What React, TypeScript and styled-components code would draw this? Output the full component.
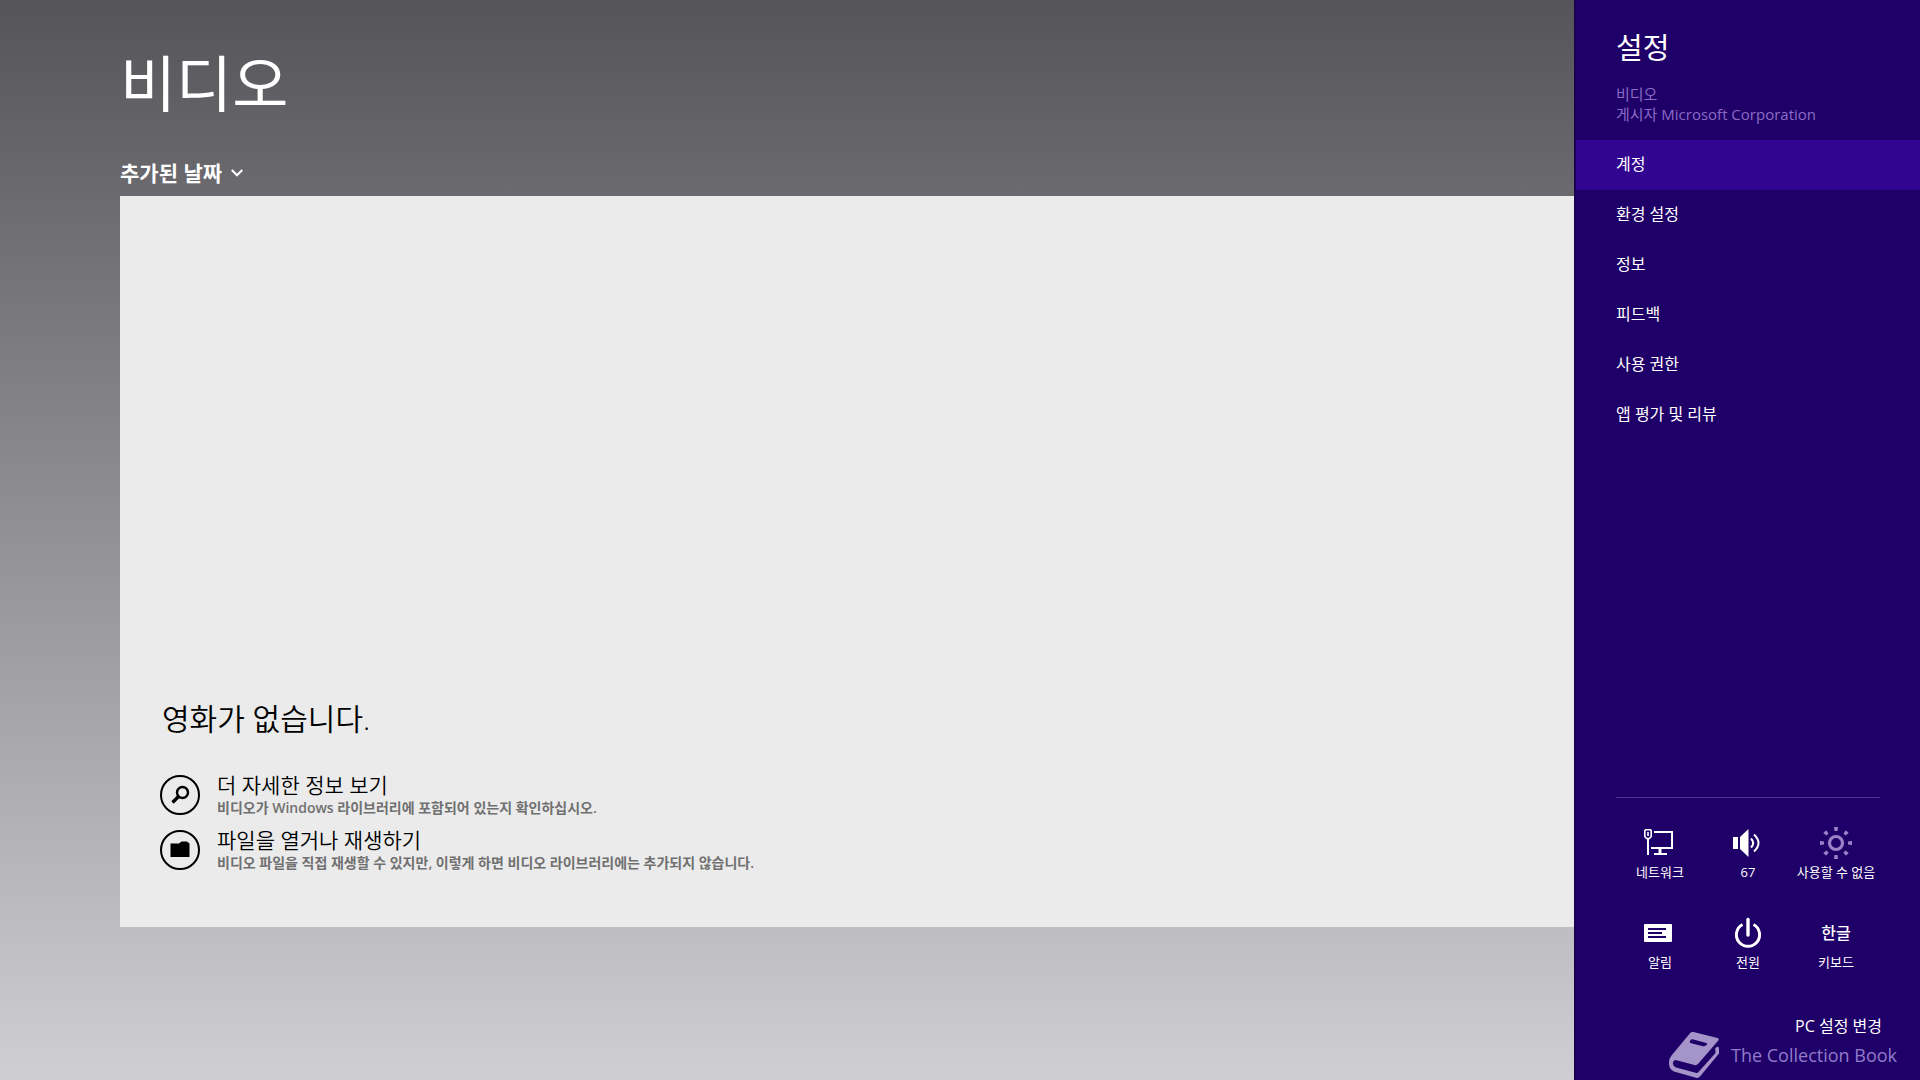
import React from "react";
import styled, { createGlobalStyle } from "styled-components";

const GlobalStyle = createGlobalStyle`
  *, *::before, *::after { box-sizing: border-box; }
  body {
    margin: 0;
    font-family: "Open Sans", "Noto Sans CJK KR", sans-serif;
    font-size: 16px;
    line-height: 20px;
    color: #ffffff;
  }
  h1, h2, p, ul { margin: 0; padding: 0; font-weight: 400; }
  ul { list-style: none; }
  svg { display: block; flex: none; }
`;

const Screen = styled.div`
  display: flex;
  min-height: 100vh;
  background: linear-gradient(#555459, #cfced3);
`;

const Library = styled.main`
  flex: 1;
  min-width: 0;
  display: flex;
  flex-direction: column;
  padding: 40px 0 153px 120px;
`;

const PageTitle = styled.h1`
  font-size: 61px;
  line-height: 88px;
  font-weight: 400;
`;

const SortBar = styled.div`
  display: flex;
  align-items: center;
  gap: 9px;
  height: 28px;
  margin: 31px 0 9px;
`;

const SortSelect = styled.select`
  appearance: none;
  field-sizing: content;
  border: 0;
  padding: 0;
  background: transparent;
  color: inherit;
  font: inherit;
  font-size: 21px;
  line-height: 28px;
  font-weight: 700;
`;

const EmptyPanel = styled.section`
  flex: 1;
  display: flex;
  flex-direction: column;
  justify-content: flex-end;
  padding: 40px 40px 52px;
  background: #ebebeb;
  color: #000000;
`;

const EmptyTitle = styled.h2`
  padding-left: 2px;
  font-size: 30px;
  line-height: 40px;
  margin-bottom: 31px;
  font-weight: 350;
`;

const ActionList = styled.ul`
  display: flex;
  flex-direction: column;
  gap: 5px;
`;

const Action = styled.button`
  display: flex;
  align-items: center;
  gap: 17px;
  height: 50px;
  padding: 0;
  border: 0;
  background: transparent;
  color: inherit;
  font: inherit;
  text-align: left;
`;

const ActionText = styled.span`
  display: flex;
  flex-direction: column;
`;

const ActionTitle = styled.span`
  font-size: 21px;
  line-height: 26px;
  font-weight: 350;
`;

const ActionHint = styled.span`
  font-size: 14px;
  line-height: 20px;
  font-weight: 600;
  color: #707070;
`;

const Settings = styled.aside`
  width: 346px;
  flex: none;
  display: flex;
  flex-direction: column;
  padding-top: 28px;
  border-left: 2px solid #180052;
  background: #1f0068;
`;

const SettingsHeader = styled.header`
  padding: 0 40px 16px;
`;

const SettingsTitle = styled.h2`
  font-size: 29px;
  line-height: 40px;
  margin-bottom: 16px;
`;

const AppMeta = styled.p`
  font-size: 15px;
  line-height: 20px;
  color: #8a6cc4;
`;

const MenuButton = styled.button<{ $active: boolean }>`
  display: block;
  width: 100%;
  height: 50px;
  padding: 0 40px 2px;
  border: 0;
  background: ${(p) => (p.$active ? "#320591" : "transparent")};
  color: inherit;
  font: inherit;
  text-align: left;
`;

const QuickArea = styled.div`
  margin: auto 40px 0 40px;
  border-top: 1px solid #503590;
  padding-top: 25px;
`;

const QuickGrid = styled.ul`
  display: grid;
  grid-template-columns: repeat(3, 1fr);
  row-gap: 30px;
`;

const QuickButton = styled.button`
  display: flex;
  flex-direction: column;
  align-items: center;
  gap: 5px;
  width: 100%;
  height: 60px;
  padding: 4px 0 0;
  border: 0;
  background: transparent;
  color: inherit;
  font: inherit;
  font-size: 13px;
  line-height: 16px;
  white-space: nowrap;
`;

const IconBox = styled.span`
  display: flex;
  align-items: center;
  justify-content: center;
  height: 32px;
`;

const ImeMark = styled.span`
  font-size: 16px;
  font-weight: 500;
`;

const PcSettingsLink = styled.a`
  display: block;
  margin: 43px 38px 0 0;
  color: inherit;
  text-align: right;
  text-decoration: none;
`;

const Watermark = styled.footer`
  display: flex;
  align-items: center;
  justify-content: flex-end;
  gap: 12px;
  height: 46px;
  margin-top: -4px;
  margin-bottom: 2px;
  padding-right: 23px;
  font-size: 18px;
  color: #917bcb;
`;

const SearchIcon = () => (
  <svg width="40" height="40" viewBox="0 0 40 40" fill="none" stroke="#000" aria-hidden="true">
    <circle cx="20" cy="20" r="19" strokeWidth="2" />
    <circle cx="22.5" cy="17.5" r="5.5" strokeWidth="2.4" />
    <path d="M18.5 21.5 L12.5 27.5" strokeWidth="3.4" />
  </svg>
);

const FolderIcon = () => (
  <svg width="40" height="40" viewBox="0 0 40 40" fill="none" aria-hidden="true">
    <circle cx="20" cy="20" r="19" stroke="#000" strokeWidth="2" />
    <path d="M10.5 13.5 H19 L21.5 11.5 H27 L29.5 13.5 V27 H10.5 Z" fill="#000" />
  </svg>
);

const ChevronIcon = () => (
  <svg width="12" height="8" viewBox="0 0 12 8" fill="none" stroke="#fff" strokeWidth="2.2" aria-hidden="true">
    <path d="M0.8 1 L6 6.2 L11.2 1" />
  </svg>
);

const NetworkIcon = () => (
  <svg width="32" height="32" viewBox="0 0 32 32" fill="none" stroke="#fff" strokeWidth="2" aria-hidden="true">
    <path d="M1.500 2.800 H6.500 L7.200 3.500 V9.500 L5.500 11.500 H2.500 L0.800 9.500 V3.500 Z" strokeWidth="1.600" />
    <path d="M4 5 V9" strokeWidth="1.6" />
    <path d="M4 11 V28" />
    <path d="M10 5 H28 V21 H7" />
    <path d="M10 27 H23" />
    <path d="M16 21 V27" strokeWidth="3" />
  </svg>
);

const VolumeIcon = () => (
  <svg width="32" height="32" viewBox="0 0 32 32" fill="none" stroke="#fff" strokeWidth="2" aria-hidden="true">
    <path d="M1 10 H6 V22 H1 Z M8 10 L16.5 2 V30 L8 22 Z" fill="#fff" stroke="none" />
    <path d="M19 11.5 Q23.4 16 19 20.5" />
    <path d="M22 7.5 Q31 16 22 24.5" />
  </svg>
);

const BrightnessIcon = () => (
  <svg width="32" height="32" viewBox="0 0 32 32" fill="none" stroke="#9a82c8" aria-hidden="true">
    <circle cx="16" cy="16" r="6.5" strokeWidth="3.2" />
    {[0, 45, 90, 135, 180, 225, 270, 315].map((angle) => (
      <path key={angle} d="M14 0 H18 L17.500 4 H14.500 Z" fill="#9a82c8" stroke="none" transform={`rotate(${angle} 16 16)`} />
    ))}
  </svg>
);

const NotificationIcon = () => (
  <svg width="32" height="32" viewBox="0 0 32 32" fill="none" aria-hidden="true">
    <rect x="0" y="7" width="28" height="18" rx="1" fill="#fff" />
    <path d="M4 12 H22 M4 16 H18 M4 20 H22" stroke="#1f0068" strokeWidth="2" />
  </svg>
);

const PowerIcon = () => (
  <svg width="32" height="32" viewBox="0 0 32 32" fill="none" stroke="#fff" strokeWidth="3" aria-hidden="true">
    <path d="M10.5 7.500 A11.6 11.6 0 1 0 21.5 7.500" />
    <path d="M16 2.500 V18" strokeLinecap="round" strokeWidth="3.4" />
  </svg>
);

const BookIcon = () => (
  <svg width="50" height="46" viewBox="0 0 50 46" aria-hidden="true">
    <path
      fillRule="evenodd"
      fill="#a594c9"
      d="M24.5 0 L48.5 6 Q50.5 6.600 49.300 8.500 L29 32 Q27.500 33.500 25.500 33 L6.500 28 Q3.500 28.500 4 32 Q4.300 34.500 7 35.500 L27.500 41 Q28.500 41.200 29.300 40.300 L46.500 21 L46.300 16 L49 14.500 Q50 15 50 17 V21.500 L31 44.500 Q29.500 46.400 27 45.700 L5 39.500 Q0.500 37.500 0 32 Q-0.200 26.500 2.500 23.500 L21 1.200 Q22.500 -0.500 24.500 0 Z M22 7.500 Q20 9.500 21.200 11 L34 14.200 Q36 14.500 37.500 13 Q39 11.500 37.300 10.900 L24.500 7.500 Q23 7 22 7.500 Z"
    />
  </svg>
);

const actions = [
  { icon: <SearchIcon />, title: "더 자세한 정보 보기", hint: "비디오가 Windows 라이브러리에 포함되어 있는지 확인하십시오." },
  { icon: <FolderIcon />, title: "파일을 열거나 재생하기", hint: "비디오 파일을 직접 재생할 수 있지만, 이렇게 하면 비디오 라이브러리에는 추가되지 않습니다." },
];

const menu = ["계정", "환경 설정", "정보", "피드백", "사용 권한", "앱 평가 및 리뷰"];

const quickSettings = [
  { icon: <NetworkIcon />, label: "네트워크" },
  { icon: <VolumeIcon />, label: "67" },
  { icon: <BrightnessIcon />, label: "사용할 수 없음" },
  { icon: <NotificationIcon />, label: "알림" },
  { icon: <PowerIcon />, label: "전원" },
  { icon: <ImeMark>한글</ImeMark>, label: "키보드" },
];

export default function App() {
  return (
    <>
      <GlobalStyle />
      <Screen>
        <Library>
          <PageTitle>비디오</PageTitle>
          <SortBar>
            <SortSelect aria-label="정렬">
              <option>추가된 날짜</option>
            </SortSelect>
            <ChevronIcon />
          </SortBar>
          <EmptyPanel>
            <EmptyTitle>영화가 없습니다.</EmptyTitle>
            <ActionList>
              {actions.map((a) => (
                <li key={a.title}>
                  <Action type="button">
                    {a.icon}
                    <ActionText>
                      <ActionTitle>{a.title}</ActionTitle>
                      <ActionHint>{a.hint}</ActionHint>
                    </ActionText>
                  </Action>
                </li>
              ))}
            </ActionList>
          </EmptyPanel>
        </Library>
        <Settings>
          <SettingsHeader>
            <SettingsTitle>설정</SettingsTitle>
            <AppMeta>비디오</AppMeta>
            <AppMeta>게시자 Microsoft Corporation</AppMeta>
          </SettingsHeader>
          <nav>
            <ul>
              {menu.map((label, i) => (
                <li key={label}>
                  <MenuButton type="button" $active={i === 0}>{label}</MenuButton>
                </li>
              ))}
            </ul>
          </nav>
          <QuickArea>
            <QuickGrid>
              {quickSettings.map((q) => (
                <li key={q.label}>
                  <QuickButton type="button">
                    <IconBox>{q.icon}</IconBox>
                    {q.label}
                  </QuickButton>
                </li>
              ))}
            </QuickGrid>
          </QuickArea>
          <PcSettingsLink href="#pc-settings">PC 설정 변경</PcSettingsLink>
          <Watermark>
            <BookIcon />
            The Collection Book
          </Watermark>
        </Settings>
      </Screen>
    </>
  );
}
